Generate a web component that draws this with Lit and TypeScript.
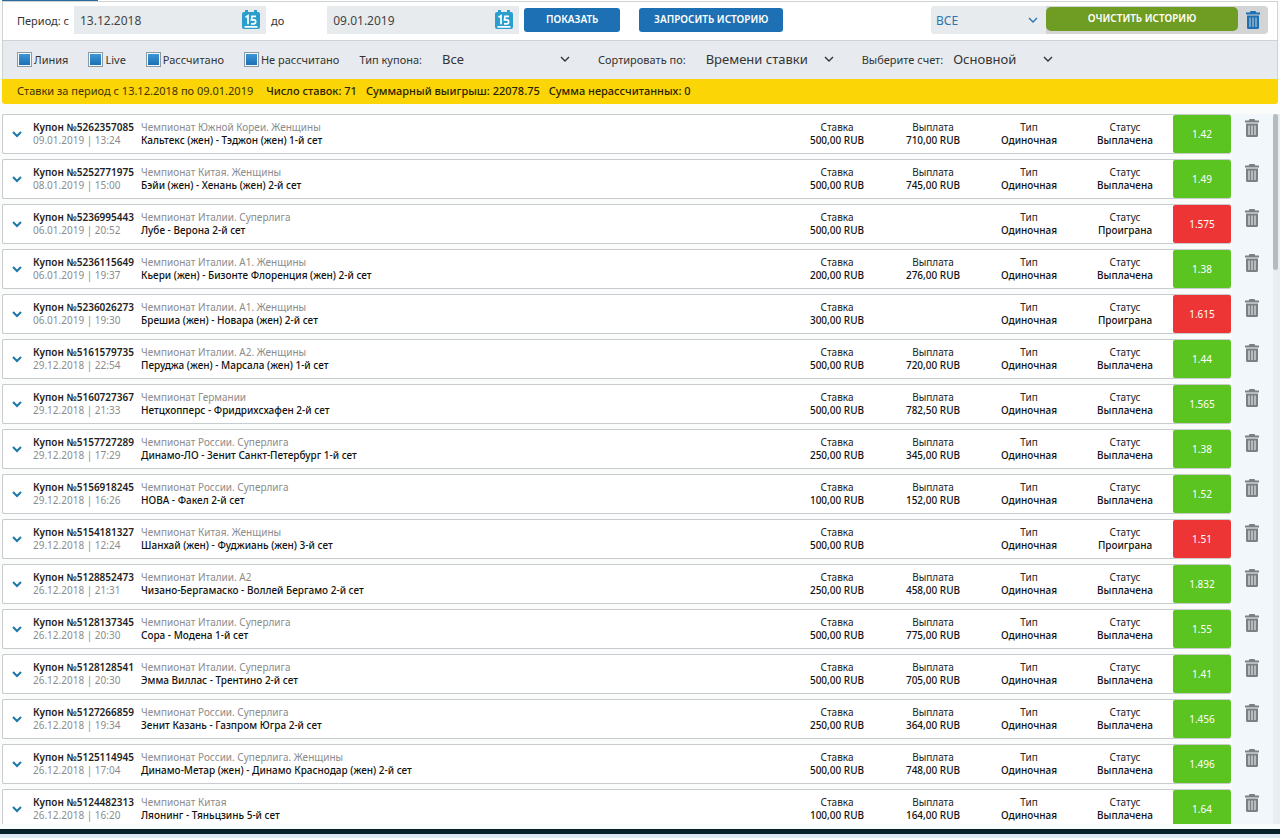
import { LitElement, html, css, svg, nothing } from "lit";
import { customElement, property } from "lit/decorators.js";
import { classMap } from "lit/directives/class-map.js";

interface Coupon {
  id: string;
  date: string;
  league: string;
  match: string;
  stake: string;
  payout: string;
  odds: string;
}

const row = (
  id: string,
  date: string,
  league: string,
  match: string,
  stake: string,
  payout: string,
  odds: string
): Coupon => ({ id, date, league, match, stake, payout, odds });

const COUPONS: Coupon[] = [
  row("5262357085", "09.01.2019 | 13:24", "Чемпионат Южной Кореи. Женщины", "Кальтекс (жен) - Тэджон (жен) 1-й сет", "500,00", "710,00", "1.42"),
  row("5252771975", "08.01.2019 | 15:00", "Чемпионат Китая. Женщины", "Бэйи (жен) - Хенань (жен) 2-й сет", "500,00", "745,00", "1.49"),
  row("5236995443", "06.01.2019 | 20:52", "Чемпионат Италии. Суперлига", "Лубе - Верона 2-й сет", "500,00", "", "1.575"),
  row("5236115649", "06.01.2019 | 19:37", "Чемпионат Италии. А1. Женщины", "Кьери (жен) - Бизонте Флоренция (жен) 2-й сет", "200,00", "276,00", "1.38"),
  row("5236026273", "06.01.2019 | 19:30", "Чемпионат Италии. А1. Женщины", "Брешиа (жен) - Новара (жен) 2-й сет", "300,00", "", "1.615"),
  row("5161579735", "29.12.2018 | 22:54", "Чемпионат Италии. А2. Женщины", "Перуджа (жен) - Марсала (жен) 1-й сет", "500,00", "720,00", "1.44"),
  row("5160727367", "29.12.2018 | 21:33", "Чемпионат Германии", "Нетцхопперс - Фридрихсхафен 2-й сет", "500,00", "782,50", "1.565"),
  row("5157727289", "29.12.2018 | 17:29", "Чемпионат России. Суперлига", "Динамо-ЛО - Зенит Санкт-Петербург 1-й сет", "250,00", "345,00", "1.38"),
  row("5156918245", "29.12.2018 | 16:26", "Чемпионат России. Суперлига", "НОВА - Факел 2-й сет", "100,00", "152,00", "1.52"),
  row("5154181327", "29.12.2018 | 12:24", "Чемпионат Китая. Женщины", "Шанхай (жен) - Фуджиань (жен) 3-й сет", "500,00", "", "1.51"),
  row("5128852473", "26.12.2018 | 21:31", "Чемпионат Италии. А2", "Чизано-Бергамаско - Воллей Бергамо 2-й сет", "250,00", "458,00", "1.832"),
  row("5128137345", "26.12.2018 | 20:30", "Чемпионат Италии. Суперлига", "Сора - Модена 1-й сет", "500,00", "775,00", "1.55"),
  row("5128128541", "26.12.2018 | 20:30", "Чемпионат Италии. Суперлига", "Эмма Виллас - Трентино 2-й сет", "500,00", "705,00", "1.41"),
  row("5127266859", "26.12.2018 | 19:34", "Чемпионат России. Суперлига", "Зенит Казань - Газпром Югра 2-й сет", "250,00", "364,00", "1.456"),
  row("5125114945", "26.12.2018 | 17:04", "Чемпионат России. Суперлига. Женщины", "Динамо-Метар (жен) - Динамо Краснодар (жен) 2-й сет", "500,00", "748,00", "1.496"),
  row("5124482313", "26.12.2018 | 16:20", "Чемпионат Китая", "Ляонинг - Тяньцзинь 5-й сет", "100,00", "164,00", "1.64"),
];

const trashIcon = html`<svg width="14" height="18" viewBox="0 0 14 18" aria-hidden="true">
  ${svg`<path fill="currentColor" fill-rule="evenodd" d="M4.500 0h5l.8 1.500H14v2H0v-2h3.700zM1 4.500h12v12a1.500 1.500 0 0 1-1.500 1.500h-9A1.500 1.500 0 0 1 1 16.500zM3.500 6.500v9.500h1V6.500zM6.500 6.500v9.500h1V6.500zM9.500 6.500v9.500h1V6.500z"/>`}
</svg>`;

const calendarIcon = html`<svg width="18" height="20" viewBox="0 0 18 20" aria-hidden="true">
  ${svg`<path fill="#2a9fcd" d="M2 2h1V0h3v2h6V0h3v2h1a2 2 0 0 1 2 2v13a2 2 0 0 1-2 2H2a2 2 0 0 1-2-2V4a2 2 0 0 1 2-2z"/>
  <path fill="none" stroke="#fff" stroke-width="1.700" d="M3.500 7.200L6 5.800v8.500M14 6.300h-4l-.5 3.500h2.200a2 2 0 0 1 0 4H9M2.500 16.800h13"/>`}
</svg>`;

@customElement("select-box")
export class SelectBox extends LitElement {
  @property() value = "";
  @property() label = "";
  @property() name = "";
  @property({ type: Boolean }) accent = false;

  static styles = css`
    :host {
      display: flex;
      align-items: center;
    }
    .label {
      font-size: 11px;
      white-space: nowrap;
      margin-right: var(--label-gap, 20px);
    }
    .box {
      display: grid;
      grid-template-columns: 1fr 10px;
      align-items: center;
      width: var(--select-width, 128px);
      color: #333;
    }
    .accent {
      color: #2c73b0;
      padding: 0 8px 0 5px;
      box-sizing: border-box;
    }
    select {
      grid-area: 1 / 1 / 2 / 3;
      appearance: none;
      border: 0;
      padding: 0;
      height: 27px;
      background: transparent;
      color: inherit;
      font: inherit;
      font-size: 13px;
    }
    .accent select {
      font-size: 12px;
    }
    svg {
      grid-area: 1 / 2;
      pointer-events: none;
    }
  `;

  render() {
    return html`
      ${this.label ? html`<label class="label" for="control">${this.label}</label>` : nothing}
      <div class=${classMap({ box: true, accent: this.accent })}>
        <select id="control" aria-label=${this.label || this.name}>
          <option>${this.value}</option>
        </select>
        <svg width="10" height="6" viewBox="0 0 10 6" fill="none" stroke="currentColor" stroke-width="1.400">
          <path d="M1 1l4 4 4-4" />
        </svg>
      </div>
    `;
  }
}

@customElement("date-field")
export class DateField extends LitElement {
  @property() label = "";
  @property() value = "";

  static styles = css`
    :host {
      display: flex;
      align-items: center;
      gap: var(--label-gap, 5px);
    }
    label {
      font-size: 11px;
      white-space: nowrap;
    }
    .field {
      display: flex;
      align-items: center;
      width: 192px;
      height: 28px;
      padding: 0 6px;
      box-sizing: border-box;
      background: #e7ebee;
    }
    input {
      flex: 1;
      min-width: 0;
      border: 0;
      padding: 0;
      background: transparent;
      font: inherit;
      font-size: 12px;
      color: #444;
    }
    button {
      display: flex;
      border: 0;
      padding: 0;
      background: none;
    }
  `;

  render() {
    return html`
      <label for="date">${this.label}</label>
      <div class="field">
        <input id="date" type="text" .value=${this.value} />
        <button type="button" aria-label="Календарь">${calendarIcon}</button>
      </div>
    `;
  }
}

@customElement("coupon-row")
export class CouponRow extends LitElement {
  @property({ attribute: false }) coupon!: Coupon;

  static styles = css`
    :host {
      display: grid;
      grid-template-columns: 1fr 42px;
      align-items: start;
    }
    .card {
      display: grid;
      grid-template-columns: 30px 108px 1fr repeat(4, 96px) 58px;
      height: 40px;
      box-sizing: border-box;
      border: 1px solid #c9cccf;
      border-right: 0;
      border-radius: 2px;
      background: #fff;
      font-size: 10px;
      line-height: 13px;
      white-space: nowrap;
      color: #222;
    }
    .cell {
      padding-top: 6px;
    }
    .center {
      text-align: center;
    }
    .strong {
      font-weight: 500;
      color: #111;
    }
    .number {
      font-weight: 600;
      color: #222;
    }
    .muted {
      color: #8c8c8c;
    }
    button {
      border: 0;
      padding: 0;
      background: none;
      display: flex;
      align-items: center;
      justify-content: center;
    }
    .toggle {
      color: #1c78a8;
      padding-right: 2px;
    }
    .remove {
      color: #7c8083;
      padding-top: 5px;
    }
    .odds {
      display: flex;
      align-items: center;
      justify-content: center;
      background: #5bc421;
      color: #fff;
      border-radius: 2px;
    }
    .lost {
      background: #ee3535;
    }
  `;

  private pair(title: string, value: string) {
    return html`<div class="cell center">
      <div>${title}</div>
      <div class="strong">${value}</div>
    </div>`;
  }

  render() {
    const c = this.coupon;
    const won = c.payout !== "";
    return html`
      <div class="card">
        <button class="toggle" type="button" aria-label="Подробнее">
          <svg width="10" height="7" viewBox="0 0 10 7" fill="none" stroke="currentColor" stroke-width="2">
            <path d="M1 1l4 4 4-4" />
          </svg>
        </button>
        <div class="cell">
          <div class="number">Купон №${c.id}</div>
          <div class="muted">${c.date}</div>
        </div>
        <div class="cell">
          <div class="muted">${c.league}</div>
          <div class="strong">${c.match}</div>
        </div>
        ${this.pair("Ставка", `${c.stake} RUB`)}
        ${won ? this.pair("Выплата", `${c.payout} RUB`) : html`<div></div>`}
        ${this.pair("Тип", "Одиночная")}
        ${this.pair("Статус", won ? "Выплачена" : "Проиграна")}
        <div class=${classMap({ odds: true, lost: !won })}>${c.odds}</div>
      </div>
      <button class="remove" type="button" aria-label="Удалить">${trashIcon}</button>
    `;
  }
}

@customElement("app-root")
export class AppRoot extends LitElement {
  static styles = css`
    :host {
      display: flex;
      flex-direction: column;
      height: 100vh;
      overflow: hidden;
      font-family: "Noto Sans", "Open Sans", sans-serif;
      color: #333;
      background: #fafbfb;
    }
    .tabs {
      display: flex;
      height: 1px;
      padding-left: 2px;
      background: #fff;
    }
    .tab {
      width: 96px;
      background: #2b6a9c;
    }
    .panel {
      margin: 0 2px;
      border: 1px solid #cfd3d3;
      border-bottom: 0;
    }
    .toolbar {
      display: flex;
      align-items: center;
      height: 34px;
      padding: 1px 9px 3px 14px;
      background: #fff;
    }
    .until {
      margin-left: 5px;
      --label-gap: 43px;
    }
    .button {
      height: 24px;
      border: 0;
      border-radius: 3px;
      padding: 0 0 2px;
      font: inherit;
      font-size: 10px;
      font-weight: 600;
      color: #fff;
      background: #1c70b3;
    }
    .show {
      width: 96px;
      margin: 0 19px 0 5px;
    }
    .request {
      width: 144px;
    }
    .clear {
      display: flex;
      align-items: center;
      height: 28px;
      margin-left: auto;
      border-radius: 4px;
      overflow: hidden;
      background: #d3d4d5;
    }
    .scope {
      --select-width: 115px;
      height: 28px;
      background: #e7ebee;
    }
    .green {
      width: 192px;
      margin-bottom: 2px;
      border-radius: 5px;
      background: #6f9c22;
    }
    .trash {
      display: flex;
      width: 30px;
      justify-content: center;
      border: 0;
      padding: 0;
      background: none;
      color: #1c70b3;
    }
    .filters {
      display: flex;
      align-items: center;
      height: 39px;
      padding: 0 14px 2px;
      box-sizing: border-box;
      border-top: 1px solid #cfd3d6;
      background: #e7ebef;
      font-size: 11px;
    }
    .check {
      display: flex;
      align-items: center;
      gap: 2px;
      margin-right: 20px;
      white-space: nowrap;
    }
    .check input {
      appearance: none;
      margin: 0;
      width: 15px;
      height: 15px;
      border: 1px solid #8a9aa5;
      background: #f4f8fa;
    }
    .check input:checked {
      background: linear-gradient(#3d97d6, #1b6fb3) content-box, #f4f8fa;
      padding: 1px;
    }
    .sort {
      margin-left: 28px;
    }
    .account {
      margin-left: 28px;
      --label-gap: 10px;
      --select-width: 100px;
    }
    .summary {
      display: flex;
      align-items: center;
      gap: 9px;
      height: 25px;
      margin: 0 2px;
      padding: 0 15px 2px;
      box-sizing: border-box;
      border-radius: 0 0 3px 3px;
      background: #fbd505;
      font-size: 11px;
      white-space: nowrap;
      color: #3d3300;
    }
    .period {
      margin-right: 4px;
    }
    .total {
      font-weight: 500;
      color: #2a2300;
    }
    .history {
      flex: 1;
      min-height: 0;
      display: grid;
      grid-template-columns: 1fr 7px;
      margin: 10px 0 0 2px;
      background: linear-gradient(to left, #f1f7fa 48px, transparent 48px);
    }
    .list {
      display: flex;
      flex-direction: column;
      gap: 5px;
      min-height: 0;
      overflow: hidden;
    }
    .list coupon-row {
      flex: none;
    }
    .track {
      background: #e9eef1;
      min-height: 0;
    }
    .thumb {
      height: 22%;
      margin-right: 2px;
      border-radius: 3px;
      background: #b5bbbf;
    }
    .footer {
      flex: none;
      margin-top: 5px;
      height: 4px;
      border-top: 5px solid #08202a;
      background: #dbe8f2;
    }
  `;

  render() {
    return html`
      <div class="tabs"><div class="tab"></div></div>
      <div class="panel">
        <div class="toolbar">
          <date-field label="Период: с" value="13.12.2018"></date-field>
          <date-field class="until" label="до" value="09.01.2019"></date-field>
          <button class="button show" type="button">ПОКАЗАТЬ</button>
          <button class="button request" type="button">ЗАПРОСИТЬ ИСТОРИЮ</button>
          <div class="clear">
            <select-box class="scope" value="ВСЕ" name="Какие купоны" accent></select-box>
            <button class="button green" type="button">ОЧИСТИТЬ ИСТОРИЮ</button>
            <button class="trash" type="button" aria-label="Удалить">${trashIcon}</button>
          </div>
        </div>
        <div class="filters">
          ${["Линия", "Live", "Рассчитано", "Не рассчитано"].map(
            (name) => html`<label class="check"><input type="checkbox" checked />${name}</label>`
          )}
          <select-box label="Тип купона:" value="Все"></select-box>
          <select-box class="sort" label="Сортировать по:" value="Времени ставки"></select-box>
          <select-box class="account" label="Выберите счет:" value="Основной"></select-box>
        </div>
      </div>
      <div class="summary">
        <span class="period">Ставки за период с 13.12.2018 по 09.01.2019</span>
        <span class="total">Число ставок: 71</span>
        <span class="total">Суммарный выигрыш: 22078.75</span>
        <span class="total">Сумма нерассчитанных: 0</span>
      </div>
      <div class="history">
        <div class="list">
          ${COUPONS.map((c) => html`<coupon-row .coupon=${c}></coupon-row>`)}
        </div>
        <div class="track"><div class="thumb"></div></div>
      </div>
      <div class="footer"></div>
    `;
  }
}
